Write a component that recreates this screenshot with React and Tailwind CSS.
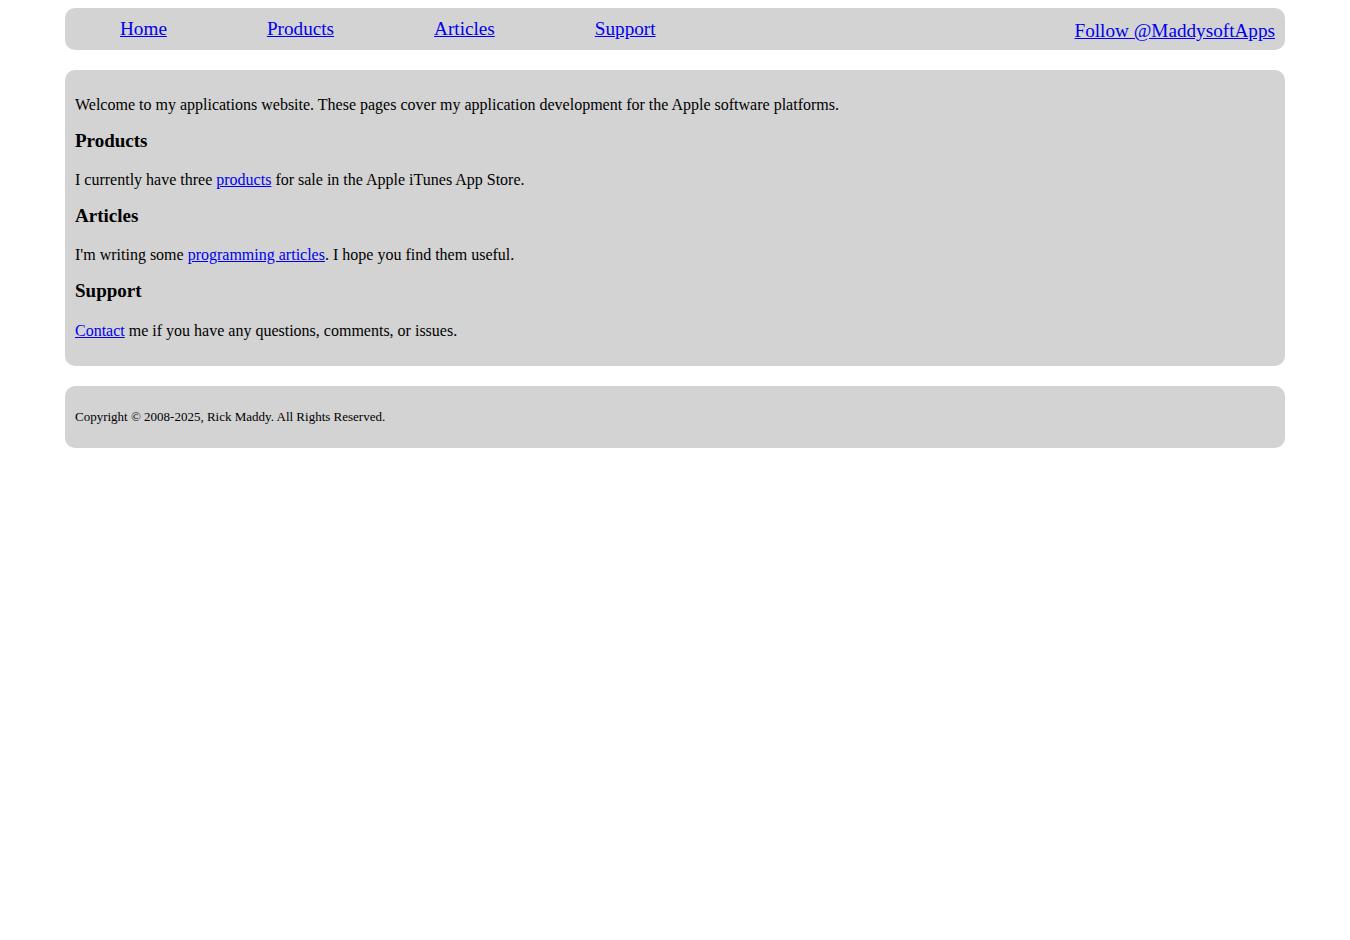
export default function App() {
  const link = "text-[#0000ee] underline";
  return (
    <div className="min-h-[940px] bg-white text-black" style={{ fontFamily: '"Liberation Serif", "Times New Roman", serif' }}>
      <div className="mx-auto w-[1220px] pt-2">
        <nav className="flex h-[42px] items-start rounded-[10px] bg-[#d3d3d3] pl-[55px] pr-[10px] pt-[10px] text-[19.2px] leading-[22px]">
          <div className="flex gap-[100px]">
            <a href="#" className={link}>Home</a>
            <a href="#" className={link}>Products</a>
            <a href="#" className={link}>Articles</a>
            <a href="#" className={link}>Support</a>
          </div>
          <a href="#" className={`${link} ml-auto pt-[2px]`}>Follow @MaddysoftApps</a>
        </nav>

        <main className="mt-5 rounded-[10px] bg-[#d3d3d3] px-[10px] pt-[26px] pb-[26px] text-[16px] leading-[18px]">
          <p>Welcome to my applications website. These pages cover my application development for the Apple software platforms.</p>
          <h3 className="mt-4 text-[19px] font-bold leading-[22px]">Products</h3>
          <p className="mt-[19px]">I currently have three <a href="#" className={link}>products</a> for sale in the Apple iTunes App Store.</p>
          <h3 className="mt-4 text-[19px] font-bold leading-[22px]">Articles</h3>
          <p className="mt-[19px]">I'm writing some <a href="#" className={link}>programming articles</a>. I hope you find them useful.</p>
          <h3 className="mt-4 text-[19px] font-bold leading-[22px]">Support</h3>
          <p className="mt-[20px]"><a href="#" className={link}>Contact</a> me if you have any questions, comments, or issues.</p>
        </main>

        <footer className="mt-5 rounded-[10px] bg-[#d3d3d3] px-[10px] pt-[23px] pb-[24px] text-[13px] leading-[15px]">
          <p>Copyright © 2008-2025, Rick Maddy. All Rights Reserved.</p>
        </footer>
      </div>
    </div>
  );
}
